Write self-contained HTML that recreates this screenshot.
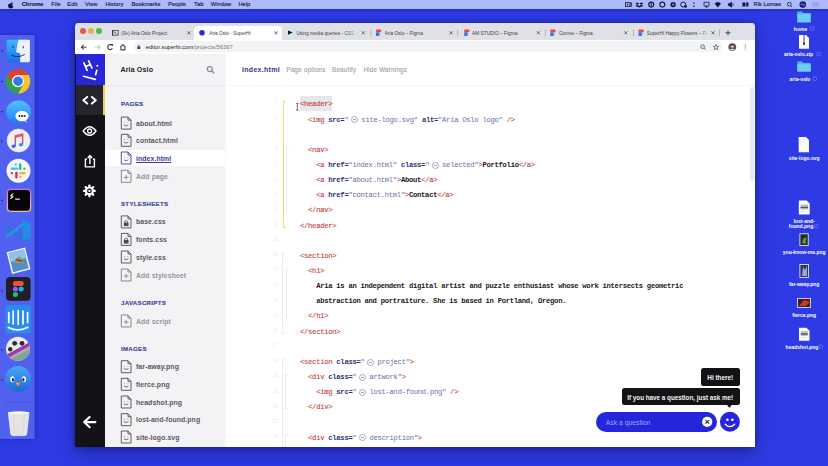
<!DOCTYPE html>
<html><head><meta charset="utf-8">
<style>
*{margin:0;padding:0;box-sizing:border-box}
html,body{width:828px;height:466px;overflow:hidden}
body{background:#2e3be4;font-family:"Liberation Sans",sans-serif;position:relative}
.a{position:absolute}
#menubar{left:0;top:0;width:828px;height:9px;background:#acb9fa;box-shadow:0 1px 3px rgba(0,0,60,.3);z-index:2}
#menubar span{position:absolute;top:0.3px;line-height:9px;font-size:5.8px;color:#16163a;white-space:nowrap;-webkit-text-stroke:0.12px #16163a}
#dock{left:0;top:35px;width:34.5px;height:404px;background:#5061ef}
#win{left:75px;top:22.9px;width:679.6px;height:424px;background:linear-gradient(to bottom,#dfe1e6 0,#dfe1e6 17px,#fff 17px,#fff 31px,#121217 31px);border-radius:4px 4px 0 0;overflow:hidden;box-shadow:0 0 5px rgba(0,0,60,.35),0 6px 18px rgba(0,0,50,.35)}
#tabs{left:0.5px;top:0;width:679px;height:17px;background:#dfe1e6}
#toolbar{left:0.5px;top:17px;width:679px;height:14px;background:#fff}
#omni{left:58px;top:1.3px;width:589px;height:11px;border-radius:6px;background:#f1f3f4}
.tab{position:absolute;top:3.9px;height:14px;font-size:4.8px;color:#3c4043;line-height:14px;white-space:nowrap}
#content{left:0.5px;top:31px;width:679px;height:393px;background:#fff}
#side{left:0;top:0;width:29.5px;height:393px;background:#121217}
#files{left:29.5px;top:0;width:120px;height:393px;background:#f3f3f6;box-shadow:1px 0 2px rgba(0,0,40,.04)}
.sec{position:absolute;left:16px;font-size:6.1px;font-weight:bold;color:#42429c;letter-spacing:.3px;margin-top:0.3px;-webkit-text-stroke:0.15px #42429c}
.fi{position:absolute;left:31px;font-size:6.9px;letter-spacing:.08px;font-weight:bold;color:#58585f;white-space:nowrap;line-height:8px;margin-top:0.8px}
.ic{position:absolute;left:15.5px;width:10px;height:12px}
#code{left:152px;top:0;width:527px;height:393px}
.ln{position:absolute;left:0;white-space:pre;font-family:"Liberation Mono",monospace;font-size:7.2px;letter-spacing:-0.28px;line-height:15.14px;height:15.14px;color:#222}
.w{display:inline-block;width:12.9px;height:6px;vertical-align:middle;position:relative}
.w:after{content:"";box-sizing:border-box;position:absolute;left:2.7px;top:-0.4px;width:7px;height:7px;border:0.65px solid #a8a8b4;border-radius:50%}
.w:before{content:"";box-sizing:border-box;position:absolute;left:4.8px;top:2.8px;width:2.8px;height:0.65px;background:#a8a8b4}
.hl{}
.t{color:#c43e3e;-webkit-text-stroke:0.12px #c43e3e}
.k{color:#2b3577;font-weight:bold}
.s{color:#6c6da6}
.b{color:#1a1a1a;font-weight:bold}
.dt{position:absolute;font-size:5.2px;font-weight:bold;color:#fff;white-space:nowrap;text-align:center}
</style></head><body>

<!-- menu bar -->
<div id="menubar" class="a">
  <span style="left:21.7px;font-weight:bold">Chrome</span>
  <span style="left:51.300000000000004px">File</span>
  <span style="left:67.3px">Edit</span>
  <span style="left:85.10000000000001px">View</span>
  <span style="left:105.4px">History</span>
  <span style="left:131.5px">Bookmarks</span>
  <span style="left:167.89999999999998px">People</span>
  <span style="left:194.1px">Tab</span>
  <span style="left:210.7px">Window</span>
  <span style="left:238.39999999999998px">Help</span>
  <span style="left:753.6px">Rik Lomas</span>
</div>

<svg class="a" style="left:0;top:0;z-index:3" width="828" height="12" viewBox="0 0 828 12">
 <g fill="#16163a" stroke="none">
  <path d="M11.6,2.9 Q12.5,2.6 13.1,3.3 Q12.1,3.9 12.3,5.2 Q12.5,6.3 13.4,6.6 Q13,7.8 12.2,8.3 Q11.7,8.6 11.1,8.3 Q10.6,8.1 10.1,8.3 Q9.5,8.6 9,8.1 Q8,7 8.1,5.4 Q8.3,3.6 9.8,3.4 Q10.3,3.4 10.8,3.6 Q11.2,3.7 11.6,2.9 Z M11.2,2.9 Q11.1,1.8 12.1,1.4 Q12.2,2.5 11.2,2.9 Z"/>
 </g>
 <g fill="none" stroke="#16163a" stroke-width="0.8">
  <rect x="625.6" y="2.6" width="4.4" height="4" />
  <path d="M630,3.6 L631.6,2.8 L631.6,6.4 L630,5.6"/>
  <circle cx="651.2" cy="4.6" r="2.5" stroke-width="1.1"/><circle cx="662.3" cy="4.6" r="2.5" stroke-width="1.1"/><circle cx="673.1" cy="4.6" r="2.7" fill="#16163a" stroke="none"/>
  <circle cx="683.2" cy="4.5" r="2.5" stroke-width="1"/>
  <path d="M704,2.3 L709,2.3 L709,6 L704,6 Z"/>
  <path d="M728.5,3.6 L729.8,3.6 L731.5,2.2 L731.5,7.2 L729.8,5.8 L728.5,5.8 Z" fill="#16163a"/>
  <path d="M732.8,3.3 Q733.6,4.7 732.8,6.1"/>
  <circle cx="789.3" cy="4.2" r="1.9"/><path d="M790.6,5.6 L792,7"/>
  <path d="M812,3 L819,3 M812,4.6 L819,4.6 M812,6.2 L819,6.2" stroke="#8a90e0"/>
 </g>
 <g fill="#16163a">
  <circle cx="627.6" cy="4.6" r="0.8"/>
  <path d="M637.3,2.4 L639.3,3.6 L637.3,4.8 L635.3,3.6 Z M641.3,2.4 L643.3,3.6 L641.3,4.8 L639.3,3.6 Z M637.3,4.8 L639.3,6 L641.3,4.8 L643.3,6 L639.3,7.6 L635.3,6 Z"/>
  <rect x="650.6" y="3.2" width="1.1" height="2.8"/>
  <circle cx="673.1" cy="4.6" r="1.3" fill="#6a70c8"/>
  <rect x="684.4" y="5.2" width="2.4" height="2.4"/>
  <path d="M692.7,3.4 L693.9,2 L695.1,3.4 Z M692.7,5.8 L693.9,7.2 L695.1,5.8 Z"/>
  <path d="M705.2,7.4 L706.5,5.4 L707.8,7.4 Z"/>
  <path d="M714.6,3.6 Q717.8,0.4 721,3.6 L717.8,7.4 Z"/>
  <path d="M742.4,2.6 L745,2.6 Q746.2,4.6 745,6.6 L742.4,6.6 Z M745.8,2.6 L748.4,2.6 L748.4,6.6 L745.8,6.6 Q747,4.6 745.8,2.6 Z"/>
  <circle cx="802.8" cy="4.6" r="3.3" fill="#1a237a"/>
 </g>
 <path d="M800.8,4.6 Q802,3 803,4.6 Q804,6.2 805,4.6" stroke="#acb9fa" stroke-width="0.7" fill="none"/>
</svg>
<!-- dock -->
<div class="a" style="left:0;top:35px;width:34.5px;height:404px;box-shadow:0 0 4px rgba(0,0,60,.35)"></div>
<svg class="a" style="left:0;top:0" width="40" height="466" viewBox="0 0 40 466">
  <rect x="0" y="35" width="34.5" height="404" fill="#5061ef"/>
  <g fill="#1b1f5a">
    <circle cx="2" cy="51" r="0.8"/><circle cx="2" cy="81.5" r="0.8"/><circle cx="2" cy="111.6" r="0.8"/><circle cx="2" cy="141.3" r="0.8"/>
    <circle cx="2" cy="200.5" r="0.8"/><circle cx="2" cy="291" r="0.8"/><circle cx="2" cy="350" r="0.8"/><circle cx="2" cy="380" r="0.8"/>
  </g>
  <!-- finder -->
  <defs><linearGradient id="fg" x1="0" y1="0" x2="0" y2="1"><stop offset="0" stop-color="#3cbaf6"/><stop offset="1" stop-color="#1a6fe6"/></linearGradient></defs>
  <rect x="6.7" y="39.7" width="23.2" height="22.6" rx="1.5" fill="url(#fg)"/>
  <path d="M18.6,39.7 L28.4,39.7 Q29.9,39.7 29.9,41.2 L29.9,60.8 Q29.9,62.3 28.4,62.3 L20.2,62.3 L20.2,53.2 L16.2,52.2 Q16.5,46 18.6,39.7 Z" fill="#eef0f5"/>
  <path d="M11.2,55 Q17.8,58.6 24.7,54.4" stroke="#15224a" stroke-width="0.9" fill="none"/>
  <rect x="12.5" y="45.8" width="0.9" height="2.2" fill="#15224a"/><rect x="22.8" y="46.1" width="0.9" height="2.2" fill="#15224a"/>
  <!-- chrome -->
  <g transform="translate(18 81.2)">
    <circle r="12.3" fill="#2f9e4f"/>
    <path d="M0,-6.1 L10.68,-6.1 A12.3,12.3 0 0 0 -10.62,-6.2 L-5.28,3.05 A6.1,6.1 0 0 1 0,-6.1 Z" fill="#dc4233"/>
    <path d="M0,-6.1 L10.68,-6.1 A12.3,12.3 0 0 0 -10.62,-6.2 L-5.28,3.05 A6.1,6.1 0 0 1 0,-6.1 Z" fill="#f7c22c" transform="rotate(120)"/>
    <path d="M0,-6.1 L10.68,-6.1 A12.3,12.3 0 0 0 -10.62,-6.2 L-5.28,3.05 A6.1,6.1 0 0 1 0,-6.1 Z" fill="#2f9e4f" transform="rotate(240)"/>
    <circle r="6.1" fill="#fff"/><circle r="4.8" fill="#3a78e0"/>
  </g>
  <!-- messages -->
  <defs><linearGradient id="mg" x1="0" y1="0" x2="0" y2="1"><stop offset="0" stop-color="#55c0ff"/><stop offset="1" stop-color="#1b7ff2"/></linearGradient>
  <linearGradient id="ng" x1="0" y1="0" x2="0" y2="1"><stop offset="0" stop-color="#f0466a"/><stop offset=".55" stop-color="#c8508f"/><stop offset="1" stop-color="#3f7ff0"/></linearGradient></defs>
  <ellipse cx="18.5" cy="112" rx="12.5" ry="11.5" fill="url(#mg)"/>
  <ellipse cx="22" cy="116" rx="6.6" ry="5.2" fill="#fff"/>
  <path d="M25,120 L27.5,122.3 L24,121 Z" fill="#fff"/>
  <g fill="#1b2550"><circle cx="19.4" cy="116" r="1.05"/><circle cx="22" cy="116" r="1.05"/><circle cx="24.6" cy="116" r="1.05"/></g>
  <!-- music -->
  <circle cx="18.6" cy="140.5" r="11.6" fill="#f1f0f4"/>
  <circle cx="18.6" cy="140.5" r="11.6" fill="none" stroke="#dcdbe6" stroke-width="0.6"/>
  <path d="M15.3,146 L15.3,136 L22.6,134 L22.6,144.5" stroke="url(#ng)" stroke-width="1.5" fill="none"/>
  <path d="M15.3,136 L22.6,134 L22.6,136 L15.3,138 Z" fill="#ec4a6e"/>
  <ellipse cx="13.6" cy="146.2" rx="2" ry="1.7" fill="#5a5ad8"/><ellipse cx="20.9" cy="144.8" rx="2" ry="1.7" fill="#3c8af0"/>
  <!-- slack -->
  <circle cx="18.5" cy="170.8" r="12" fill="#f6f6f8"/>
  <g stroke-width="2.3" stroke-linecap="round">
    <path d="M11.6,168.6 L17.4,168.6" stroke="#36c5f0"/><path d="M15.8,164.4 L15.8,164.5" stroke="#36c5f0"/>
    <path d="M20.2,164.4 L20.2,168.9" stroke="#2eb67d"/><path d="M24.4,168.6 L24.4,168.7" stroke="#2eb67d"/>
    <path d="M20.2,173.1 L24.6,173.1" stroke="#ecb22e"/><path d="M20.5,176.8 L20.5,176.9" stroke="#ecb22e"/>
    <path d="M16.4,172.8 L16.4,177.4" stroke="#e01e5a"/><path d="M11.8,173.1 L11.8,173.2" stroke="#e01e5a"/>
  </g>
  <!-- terminal -->
  <defs><linearGradient id="trg" x1="0" y1="0" x2="0" y2="1"><stop offset="0" stop-color="#d868d8"/><stop offset="1" stop-color="#f4b8a0"/></linearGradient></defs>
  <rect x="7.4" y="189.4" width="23.2" height="21.9" rx="3.2" fill="#06060a" stroke="url(#trg)" stroke-width="1.3"/>
  <path d="M13.2,193.6 L10.6,195.8 L13,196.6 L10.4,198.8" stroke="#fff" stroke-width="1.1" fill="none" stroke-linejoin="round"/>
  <rect x="15.2" y="198.6" width="4.6" height="1.1" fill="#fff"/>
  <!-- vscode -->
  <path d="M7,226.5 L22.8,238.5" stroke="#2279cf" stroke-width="3.4" stroke-linecap="round"/>
  <path d="M7,236.5 L22.8,224.5" stroke="#2b8fe6" stroke-width="3.4" stroke-linecap="round"/>
  <path d="M22.7,219.5 L30.6,223 L30.6,238 L22.7,241.6 Z" fill="#1f8fe8"/>
  <!-- preview -->
  <g transform="rotate(-14 18.5 260.5)">
    <rect x="9" y="249.5" width="19" height="22.5" fill="#f4f6fa"/>
    <rect x="10.5" y="251" width="16" height="19.5" fill="#4f8fcf"/>
    <rect x="10.5" y="251" width="16" height="9" fill="#8fc2ee"/>
    <path d="M13,262 Q17,256 21,257 L24,266 Q19,263 13,262 Z" fill="#a88a60"/>
    <path d="M16,259 L22,262" stroke="#3a2a20" stroke-width="0.8"/>
  </g>
  <!-- figma -->
  <rect x="6" y="277" width="24.6" height="23.8" rx="4" fill="#1f1f25"/>
  <rect x="12.9" y="281" width="10.8" height="5" rx="2.5" fill="#f0503a"/>
  <circle cx="15.4" cy="289" r="2.5" fill="#9b59f6"/><circle cx="21.2" cy="289" r="2.5" fill="#19b6f5"/>
  <circle cx="15.4" cy="294.5" r="2.5" fill="#12c77e"/>
  <!-- intercom -->
  <rect x="5.5" y="305" width="25.5" height="28.4" rx="2" fill="#2a8cf0"/>
  <g stroke="#fff" stroke-width="1.7" stroke-linecap="round" fill="none">
    <path d="M8.8,312.5 L8.8,322.5"/><path d="M13.2,311 L13.2,324"/><path d="M18.2,310.5 L18.2,324.5"/><path d="M23,311 L23,324"/><path d="M27.6,312.5 L27.6,322.5"/>
    <path d="M8.4,327.4 Q18.2,332.6 27.8,327.2"/>
  </g>
  <!-- motion-like -->
  <defs><clipPath id="mc"><circle cx="18" cy="348.7" r="12"/></clipPath></defs>
  <g clip-path="url(#mc)">
    <rect x="5" y="336" width="26" height="26" fill="#e9e9ee"/>
    <path d="M4,356 L32,341 L32,364 L4,364 Z" fill="#7aa890"/>
    <path d="M4,356 L32,341 L32,345 L4,360 Z" fill="#a03aa8"/>
    <path d="M4,360 L32,345 L32,348 L4,363 Z" fill="#c8a0c8" opacity=".8"/>
  </g>
  <g fill="#2a2a30"><circle cx="14.7" cy="343.3" r="2.4"/><circle cx="22" cy="343.3" r="2.4"/><circle cx="10.2" cy="349.3" r="2.2"/></g>
  <!-- tweetbot -->
  <defs><linearGradient id="tg" x1="0" y1="0" x2="0" y2="1"><stop offset="0" stop-color="#4aa8f8"/><stop offset="1" stop-color="#1c68d8"/></linearGradient></defs>
  <circle cx="18" cy="379" r="13" fill="url(#tg)"/>
  <ellipse cx="12.3" cy="379.3" rx="2.1" ry="3" fill="#fff"/><ellipse cx="24" cy="379.3" rx="2.1" ry="3" fill="#fff"/>
  <ellipse cx="12.9" cy="379.8" rx="1.1" ry="1.7" fill="#0a1a3a"/><ellipse cx="23.4" cy="379.8" rx="1.1" ry="1.7" fill="#0a1a3a"/>
  <path d="M15.6,382.6 L20.4,382.6 L18,386.4 Z" fill="#f2a02a"/>
  <!-- separator -->
  <rect x="4" y="401.8" width="27" height="0.8" fill="#4353d8"/>
  <!-- trash -->
  <path d="M8.4,412.6 L29,412.6 L26.6,434 Q26.3,435.6 24.6,435.6 L12.8,435.6 Q11.1,435.6 10.8,434 Z" fill="#e4e4e2" stroke="#f4f4f8" stroke-width="0.8"/>
  <ellipse cx="18.7" cy="412.6" rx="10.3" ry="1.3" fill="#fafafc"/>
  <path d="M13,414.5 L14,433.5 M24.4,414.5 L23.4,433.5" stroke="#d4d4d6" stroke-width="0.6"/>
</svg>


<!-- desktop icons -->
<svg class="a" style="left:0;top:0" width="828" height="466" viewBox="0 0 828 466">
  <g font-family="Liberation Sans" font-weight="bold" font-size="5px" fill="#fff">
<path d="M797.3,11.4 L802,11.4 L803.2,12.9 L810.7,12.9 L810.7,22.3 L797.3,22.3 Z" fill="#4fb6ec"/>
  <rect x="797.3" y="13.9" width="13.4" height="8.4" fill="#6cccf7"/><text x="800.5" y="30.5" text-anchor="middle">home</text>
  <rect x="810.5" y="26.8" width="3.5" height="3.5" rx="1" fill="none" stroke="#8d95f0" stroke-width="0.5"/>
<path d="M799,35 L806,35 L809,38 L809,48.8 L799,48.8 Z" fill="#fafafa"/><rect x="803.6" y="35" width="0.9" height="9" fill="#333"/><rect x="803.2" y="42.5" width="1.7" height="2.5" fill="#333"/><text x="798.5" y="56.099999999999994" text-anchor="middle">aria-oslo.zip</text>
  <rect x="817" y="52.4" width="3.5" height="3.5" rx="1" fill="none" stroke="#8d95f0" stroke-width="0.5"/>
<path d="M797.3,61.6 L802,61.6 L803.2,63.1 L810.7,63.1 L810.7,71.6 L797.3,71.6 Z" fill="#4fb6ec"/>
  <rect x="797.3" y="64.1" width="13.4" height="7.499999999999993" fill="#6cccf7"/><text x="800" y="80.7" text-anchor="middle">aria-oslo</text>
  <rect x="813" y="77" width="3.5" height="3.5" rx="1" fill="none" stroke="#8d95f0" stroke-width="0.5"/>
<path d="M798.7,137 L806,137 L809,140 L809,152.3 L798.7,152.3 Z" fill="#fafafa"/><text x="804.2" y="159.70000000000002" text-anchor="middle">site-logo.svg</text>
<path d="M798.8,200.6 L806.7,200.6 L809.7,203.6 L809.7,214.5 L798.8,214.5 Z" fill="#fafafa"/><rect x="800.5" y="204.5" width="7.5" height="5" fill="#b0c0d0"/><rect x="800.5" y="206.8" width="7.5" height="1.3" fill="#5a5a48"/><rect x="801.5" y="211" width="4" height="0.5" fill="#c8c8c8"/><text x="804.2" y="222.60000000000002" text-anchor="middle">lost-and-</text><text x="801" y="228.20000000000002" text-anchor="middle">found.png</text>
  <rect x="814.5" y="224.5" width="3.5" height="3.5" rx="1" fill="none" stroke="#8d95f0" stroke-width="0.5"/>
  <rect x="799.5" y="233.4" width="9.1" height="12.5" fill="#f2f2f2"/><rect x="800.3" y="234.2" width="7.5" height="10.9" fill="#1e3020"/><path d="M802,243 Q804,236 806.5,238 Q805,241 806,244 Z" fill="#6f9050"/>
<text x="804.2" y="254.0" text-anchor="middle">you-know-me.png</text>
  <rect x="799.5" y="264" width="9.5" height="13.8" fill="#f2f2f2"/><rect x="800.3" y="264.8" width="7.9" height="12.2" fill="#2a3570"/><path d="M802,276 L803,267 L805,270 L807,266 L807,276 Z" fill="#9aa8d0"/>
<text x="804.2" y="285.5" text-anchor="middle">far-away.png</text>
  <rect x="797" y="298" width="14" height="9.8" fill="#f0f0f0"/><rect x="797.8" y="298.8" width="12.4" height="8.2" fill="#3a2020"/><path d="M799,306 L804,300 L810,302 L806,306 Z" fill="#c83a30"/>
<text x="804.2" y="316.7" text-anchor="middle">fierce.png</text>
<path d="M799,327.8 L806.5,327.8 L809.5,330.8 L809.5,340.8 L799,340.8 Z" fill="#fafafa"/><rect x="800.8" y="331" width="7" height="5" fill="#b8c4d0"/><rect x="800.8" y="333.3" width="7" height="1.4" fill="#4a5058"/><rect x="801.5" y="337.5" width="4" height="0.5" fill="#c8c8c8"/><text x="802" y="348.5" text-anchor="middle">headshot.png</text>
  <rect x="819" y="344.8" width="3.5" height="3.5" rx="1" fill="none" stroke="#8d95f0" stroke-width="0.5"/>
  </g>
</svg>

<!-- chrome window -->
<div id="win" class="a">
  <div id="tabs" class="a">
    <div class="a" style="left:4.65px;top:5.2px;width:5.8px;height:5.8px;border-radius:50%;background:#df5a55"></div>
    <div class="a" style="left:12.9px;top:5.2px;width:5.8px;height:5.8px;border-radius:50%;background:#ebb045"></div>
    <div class="a" style="left:20.7px;top:5.2px;width:5.8px;height:5.8px;border-radius:50%;background:#55b84a"></div>
    <div class="a" style="left:118.7px;top:3.2px;width:88.2px;height:14px;background:#fff;border-radius:4px 4px 0 0"></div>
    <div class="tab" style="left:45.8px;width:60px;overflow:hidden">(9+) Aria Oslo Project</div>
    <div class="tab" style="left:133.7px;width:60px;overflow:hidden">Aria Oslo - SuperHi</div>
    <div class="tab" style="left:220.9px;width:60px;overflow:hidden">Using media queries - CSS</div>
    <div class="tab" style="left:309.1px;width:60px;overflow:hidden">Aria Oslo – Figma</div>
    <div class="tab" style="left:396.5px;width:60px;overflow:hidden">AM STUDIO – Figma</div>
    <div class="tab" style="left:483.4px;width:60px;overflow:hidden">Connie – Figma</div>
    <div class="tab" style="left:571.3px;width:60px;overflow:hidden">SuperHi Happy Flowers – Figma</div>
    <div class="a" style="left:270.5px;top:5px;width:12px;height:10px;background:linear-gradient(90deg,rgba(222,225,230,0),#dee1e6)"></div>
    <div class="a" style="left:624.5px;top:5px;width:10px;height:10px;background:linear-gradient(90deg,rgba(222,225,230,0),#dee1e6)"></div>
  </div>
  <div id="toolbar" class="a">
    <div id="omni" class="a" style="left:58px;top:1.3px;width:588px;height:11px"></div>
    <div class="a" style="left:70.2px;top:0.2px;line-height:14px;font-size:5.75px;letter-spacing:.02px;color:#202124;white-space:nowrap">editor.superhi.com<span style="color:#75787c">/projects/56367</span></div>
  </div>

  <div id="content" class="a">
    <div id="side" class="a">
      <div class="a" style="left:0;top:0;width:29.5px;height:31px;background:#2727d8"></div>
      <div class="a" style="left:0;top:31px;width:29.5px;height:30px;background:#24242c"></div>
      <div class="a" style="left:27px;top:31px;width:2.5px;height:30px;background:#f2d44a"></div>
    </div>
    <div id="files" class="a">
      <div class="a" style="left:15.5px;top:12.2px;font-size:7.1px;letter-spacing:.12px;font-weight:bold;color:#222;line-height:8px">Aria Oslo</div>
      <div class="a" style="left:0;top:31px;width:120px;height:1px;background:#e8e8ec"></div>
      <div class="sec" style="top:46px">PAGES</div>
      <div class="fi" style="top:65px">about.html</div>
      <div class="fi" style="top:82.5px">contact.html</div>
      <div class="a" style="left:0;top:96.5px;width:120px;height:15.4px;background:#fff"></div>
      <div class="fi" style="top:100px;color:#3b3ba6;text-decoration:underline">index.html</div>
      <div class="fi" style="top:118px;color:#96969c">Add page</div>
      <div class="sec" style="top:146px">STYLESHEETS</div>
      <div class="fi" style="top:163.5px">base.css</div>
      <div class="fi" style="top:181px">fonts.css</div>
      <div class="fi" style="top:199px">style.css</div>
      <div class="fi" style="top:217px;color:#96969c">Add stylesheet</div>
      <div class="sec" style="top:245px">JAVASCRIPTS</div>
      <div class="fi" style="top:263px;color:#96969c">Add script</div>
      <div class="sec" style="top:291px">IMAGES</div>
      <div class="fi" style="top:308.5px">far-away.png</div>
      <div class="fi" style="top:326.5px">fierce.png</div>
      <div class="fi" style="top:344px">headshot.png</div>
      <div class="fi" style="top:361.5px">lost-and-found.png</div>
      <div class="fi" style="top:379px">site-logo.svg</div>
    </div>
    <div id="code" class="a">
      <div class="a" style="left:14.5px;top:12.2px;font-size:7px;letter-spacing:.3px;font-weight:bold;color:#35358f;white-space:nowrap;line-height:8px">index.html</div>
      <div class="a" style="left:59px;top:12.5px;font-size:6.3px;letter-spacing:.2px;color:#9c9ca4;-webkit-text-stroke:0.1px #9c9ca4;white-space:nowrap;line-height:8px">Page options</div>
      <div class="a" style="left:104.5px;top:12.5px;font-size:6.3px;letter-spacing:.2px;color:#9c9ca4;-webkit-text-stroke:0.1px #9c9ca4;white-space:nowrap;line-height:8px">Beautify</div>
      <div class="a" style="left:136px;top:12.5px;font-size:6.3px;letter-spacing:.2px;color:#9c9ca4;-webkit-text-stroke:0.1px #9c9ca4;white-space:nowrap;line-height:8px">Hide Warnings</div>
      <div class="a" style="left:0;top:31px;width:527px;height:1px;background:#f3f3f5"></div>
<div class="a" style="left:55.60px;top:47.00px;width:1.1px;height:126.50px;background:#eee06a"></div>
<div class="a" style="left:55.60px;top:47.00px;width:2.5px;height:0.8px;background:#eee06a"></div>
<div class="a" style="left:55.60px;top:172.70px;width:2.5px;height:0.8px;background:#eee06a"></div>
<div class="a" style="left:58.50px;top:92.00px;width:0.8px;height:67.00px;background:#ebebef"></div>
<div class="a" style="left:58.50px;top:92.00px;width:2.5px;height:0.8px;background:#ebebef"></div>
<div class="a" style="left:54.90px;top:199.00px;width:0.8px;height:81.40px;background:#ebebef"></div>
<div class="a" style="left:54.90px;top:199.00px;width:2.5px;height:0.8px;background:#ebebef"></div>
<div class="a" style="left:54.90px;top:279.60px;width:2.5px;height:0.8px;background:#ebebef"></div>
<div class="a" style="left:58.10px;top:214.00px;width:0.8px;height:50.30px;background:#ebebef"></div>
<div class="a" style="left:58.10px;top:214.00px;width:2.5px;height:0.8px;background:#ebebef"></div>
<div class="a" style="left:58.10px;top:263.50px;width:2.5px;height:0.8px;background:#ebebef"></div>
<div class="a" style="left:54.70px;top:304.30px;width:0.8px;height:88.70px;background:#ebebef"></div>
<div class="a" style="left:54.70px;top:304.30px;width:2.5px;height:0.8px;background:#ebebef"></div>
<div class="a" style="left:57.50px;top:320.40px;width:0.8px;height:34.40px;background:#ebebef"></div>
<div class="a" style="left:57.50px;top:320.40px;width:2.5px;height:0.8px;background:#ebebef"></div>
<div class="a" style="left:57.50px;top:354.00px;width:2.5px;height:0.8px;background:#ebebef"></div>
<div class="a" style="left:57.50px;top:380.00px;width:0.8px;height:13.00px;background:#ebebef"></div>
<div class="a" style="left:57.50px;top:380.00px;width:2.5px;height:0.8px;background:#ebebef"></div>
<div class="a" style="left:34.50px;width:16px;text-align:right;top:46.00px;font-size:4.6px;line-height:8px;color:#ececf0;font-family:'Liberation Mono',monospace">1</div>
<div class="a" style="left:34.50px;width:16px;text-align:right;top:61.14px;font-size:4.6px;line-height:8px;color:#ececf0;font-family:'Liberation Mono',monospace">2</div>
<div class="a" style="left:34.50px;width:16px;text-align:right;top:76.28px;font-size:4.6px;line-height:8px;color:#ececf0;font-family:'Liberation Mono',monospace">3</div>
<div class="a" style="left:34.50px;width:16px;text-align:right;top:91.42px;font-size:4.6px;line-height:8px;color:#ececf0;font-family:'Liberation Mono',monospace">4</div>
<div class="a" style="left:34.50px;width:16px;text-align:right;top:106.56px;font-size:4.6px;line-height:8px;color:#ececf0;font-family:'Liberation Mono',monospace">5</div>
<div class="a" style="left:34.50px;width:16px;text-align:right;top:121.70px;font-size:4.6px;line-height:8px;color:#ececf0;font-family:'Liberation Mono',monospace">6</div>
<div class="a" style="left:34.50px;width:16px;text-align:right;top:136.84px;font-size:4.6px;line-height:8px;color:#ececf0;font-family:'Liberation Mono',monospace">7</div>
<div class="a" style="left:34.50px;width:16px;text-align:right;top:151.98px;font-size:4.6px;line-height:8px;color:#ececf0;font-family:'Liberation Mono',monospace">8</div>
<div class="a" style="left:34.50px;width:16px;text-align:right;top:167.12px;font-size:4.6px;line-height:8px;color:#ececf0;font-family:'Liberation Mono',monospace">9</div>
<div class="a" style="left:34.50px;width:16px;text-align:right;top:182.26px;font-size:4.6px;line-height:8px;color:#ececf0;font-family:'Liberation Mono',monospace">10</div>
<div class="a" style="left:34.50px;width:16px;text-align:right;top:197.40px;font-size:4.6px;line-height:8px;color:#ececf0;font-family:'Liberation Mono',monospace">11</div>
<div class="a" style="left:34.50px;width:16px;text-align:right;top:212.54px;font-size:4.6px;line-height:8px;color:#ececf0;font-family:'Liberation Mono',monospace">12</div>
<div class="a" style="left:34.50px;width:16px;text-align:right;top:227.68px;font-size:4.6px;line-height:8px;color:#ececf0;font-family:'Liberation Mono',monospace">13</div>
<div class="a" style="left:34.50px;width:16px;text-align:right;top:242.82px;font-size:4.6px;line-height:8px;color:#ececf0;font-family:'Liberation Mono',monospace">14</div>
<div class="a" style="left:34.50px;width:16px;text-align:right;top:257.96px;font-size:4.6px;line-height:8px;color:#ececf0;font-family:'Liberation Mono',monospace">15</div>
<div class="a" style="left:34.50px;width:16px;text-align:right;top:273.10px;font-size:4.6px;line-height:8px;color:#ececf0;font-family:'Liberation Mono',monospace">16</div>
<div class="a" style="left:34.50px;width:16px;text-align:right;top:288.24px;font-size:4.6px;line-height:8px;color:#ececf0;font-family:'Liberation Mono',monospace">17</div>
<div class="a" style="left:34.50px;width:16px;text-align:right;top:303.38px;font-size:4.6px;line-height:8px;color:#ececf0;font-family:'Liberation Mono',monospace">18</div>
<div class="a" style="left:34.50px;width:16px;text-align:right;top:318.52px;font-size:4.6px;line-height:8px;color:#ececf0;font-family:'Liberation Mono',monospace">19</div>
<div class="a" style="left:34.50px;width:16px;text-align:right;top:333.66px;font-size:4.6px;line-height:8px;color:#ececf0;font-family:'Liberation Mono',monospace">20</div>
<div class="a" style="left:34.50px;width:16px;text-align:right;top:348.80px;font-size:4.6px;line-height:8px;color:#ececf0;font-family:'Liberation Mono',monospace">21</div>
<div class="a" style="left:34.50px;width:16px;text-align:right;top:363.94px;font-size:4.6px;line-height:8px;color:#ececf0;font-family:'Liberation Mono',monospace">22</div>
<div class="a" style="left:34.50px;width:16px;text-align:right;top:379.08px;font-size:4.6px;line-height:8px;color:#ececf0;font-family:'Liberation Mono',monospace">23</div>
<div class="a" style="left:72.60px;top:42.10px;width:31.9px;height:15px;background:#e7e7ea"></div>

<div id="lines" class="a" style="left:72.5px;top:0">
<div class="ln" style="top:43.53px"><span class="t hl">&lt;header&gt;</span></div>
<div class="ln" style="top:58.67px">  <span class="t">&lt;img</span> <span class="k">src=</span><span class="s">"</span><span class="w"></span><span class="s">site-logo.svg</span><span class="s">"</span> <span class="k">alt=</span><span class="s">"</span><span class="s">Aria Oslo logo</span><span class="s">"</span> <span class="t">/&gt;</span></div>
<div class="ln" style="top:73.81px"></div>
<div class="ln" style="top:88.95px">  <span class="t">&lt;nav&gt;</span></div>
<div class="ln" style="top:104.09px">    <span class="t">&lt;a</span> <span class="k">href=</span><span class="s">"</span><span class="s">index.html</span><span class="s">"</span> <span class="k">class=</span><span class="s">"</span><span class="w"></span><span class="s">selected</span><span class="s">"</span><span class="t">&gt;</span><span class="b">Portfolio</span><span class="t">&lt;/a&gt;</span></div>
<div class="ln" style="top:119.23px">    <span class="t">&lt;a</span> <span class="k">href=</span><span class="s">"</span><span class="s">about.html</span><span class="s">"</span><span class="t">&gt;</span><span class="b">About</span><span class="t">&lt;/a&gt;</span></div>
<div class="ln" style="top:134.37px">    <span class="t">&lt;a</span> <span class="k">href=</span><span class="s">"</span><span class="s">contact.html</span><span class="s">"</span><span class="t">&gt;</span><span class="b">Contact</span><span class="t">&lt;/a&gt;</span></div>
<div class="ln" style="top:149.51px">  <span class="t">&lt;/nav&gt;</span></div>
<div class="ln" style="top:164.65px"><span class="t">&lt;/header&gt;</span></div>
<div class="ln" style="top:179.79px"></div>
<div class="ln" style="top:194.93px"><span class="t">&lt;section&gt;</span></div>
<div class="ln" style="top:210.07px">  <span class="t">&lt;h1&gt;</span></div>
<div class="ln" style="top:225.21px">    <span class="b">Aria is an independent digital artist and puzzle enthusiast whose work intersects geometric</span></div>
<div class="ln" style="top:240.35px">    <span class="b">abstraction and portraiture. She is based in Portland, Oregon.</span></div>
<div class="ln" style="top:255.49px">  <span class="t">&lt;/h1&gt;</span></div>
<div class="ln" style="top:270.63px"><span class="t">&lt;/section&gt;</span></div>
<div class="ln" style="top:285.77px"></div>
<div class="ln" style="top:300.91px"><span class="t">&lt;section</span> <span class="k">class=</span><span class="s">"</span><span class="w"></span><span class="s">project</span><span class="s">"</span><span class="t">&gt;</span></div>
<div class="ln" style="top:316.05px">  <span class="t">&lt;div</span> <span class="k">class=</span><span class="s">"</span><span class="w"></span><span class="s">artwork</span><span class="s">"</span><span class="t">&gt;</span></div>
<div class="ln" style="top:331.19px">    <span class="t">&lt;img</span> <span class="k">src=</span><span class="s">"</span><span class="w"></span><span class="s">lost-and-found.png</span><span class="s">"</span> <span class="t">/&gt;</span></div>
<div class="ln" style="top:346.33px">  <span class="t">&lt;/div&gt;</span></div>
<div class="ln" style="top:361.47px"></div>
<div class="ln" style="top:376.61px">  <span class="t">&lt;div</span> <span class="k">class=</span><span class="s">"</span><span class="w"></span><span class="s">description</span><span class="s">"</span><span class="t">&gt;</span></div>
</div>
    </div>
  </div>
</div>

<div class="a" style="left:750.3px;top:87px;width:3.4px;height:94px;border-radius:2px;background:#e9e9eb"></div>
<!-- chat widget -->
<div class="a" style="left:701.4px;top:368.3px;width:38.4px;height:17.8px;background:#131316;border-radius:2.5px"></div>
<div class="a" id="hi" style="left:707.3px;top:374.2px;font-size:6.4px;line-height:8px;font-weight:bold;color:#f4f4f6;white-space:nowrap">Hi there!</div>
<div class="a" style="left:621.8px;top:388px;width:118px;height:17.4px;background:#131316;border-radius:2.5px"></div>
<div class="a" style="left:728.4px;top:404px;width:2.8px;height:2.8px;background:#131316;transform:rotate(45deg)"></div>
<div class="a" id="q" style="left:627.2px;top:393.9px;font-size:6.3px;line-height:8px;font-weight:bold;color:#f4f4f6;white-space:nowrap">If you have a question, just ask me!</div>
<div class="a" style="left:595.7px;top:412.4px;width:121px;height:19.5px;background:#2526dc;border-radius:10px"></div>
<div class="a" id="ask" style="left:605.8px;top:419.2px;font-size:6.8px;line-height:8px;color:#a2a4f2;white-space:nowrap">Ask a question</div>
<svg class="a" style="left:0;top:0" width="828" height="466" viewBox="0 0 828 466">
  <circle cx="707.2" cy="421.9" r="5.1" fill="#fff"/>
  <path d="M705.4,420.1 L709,423.7 M709,420.1 L705.4,423.7" stroke="#2c2c66" stroke-width="1.2"/>
  <circle cx="729.9" cy="421.7" r="10" fill="#2526dc"/>
  <circle cx="727.4" cy="419.7" r="1.3" fill="#fff"/><circle cx="732.3" cy="419.7" r="1.3" fill="#fff"/>
  <path d="M725.2,424.2 Q729.9,429 734.6,424.2" stroke="#fff" stroke-width="1.3" fill="none" stroke-linecap="round"/>
</svg>
<!-- overlay icons -->
<svg class="a" style="left:0;top:0" width="828" height="466" viewBox="0 0 828 466">

  <!-- chrome ui -->
<path d="M187.3,31.299999999999997 L190.3,34.3 M190.3,31.299999999999997 L187.3,34.3" stroke="#45484c" stroke-width="0.8"/>
<path d="M274.5,31.299999999999997 L277.5,34.3 M277.5,31.299999999999997 L274.5,34.3" stroke="#45484c" stroke-width="0.8"/>
<path d="M361.8,31.299999999999997 L364.8,34.3 M364.8,31.299999999999997 L361.8,34.3" stroke="#45484c" stroke-width="0.8"/>
<path d="M449.5,31.299999999999997 L452.5,34.3 M452.5,31.299999999999997 L449.5,34.3" stroke="#45484c" stroke-width="0.8"/>
<path d="M536.9,31.299999999999997 L539.9,34.3 M539.9,31.299999999999997 L536.9,34.3" stroke="#45484c" stroke-width="0.8"/>
<path d="M624.3,31.299999999999997 L627.3,34.3 M627.3,31.299999999999997 L624.3,34.3" stroke="#45484c" stroke-width="0.8"/>
<path d="M711.5,31.299999999999997 L714.5,34.3 M714.5,31.299999999999997 L711.5,34.3" stroke="#45484c" stroke-width="0.8"/>
<rect x="370.6" y="29.299999999999997" width="0.6" height="7" fill="#9a9ca0"/>
<rect x="457.5" y="29.299999999999997" width="0.6" height="7" fill="#9a9ca0"/>
<rect x="544.9" y="29.299999999999997" width="0.6" height="7" fill="#9a9ca0"/>
<rect x="633" y="29.299999999999997" width="0.6" height="7" fill="#9a9ca0"/>
<rect x="719.3" y="29.299999999999997" width="0.6" height="7" fill="#9a9ca0"/>
<path d="M725.4,32.8 L730.6,32.8 M728,30.199999999999996 L728,35.4" stroke="#3c4043" stroke-width="0.9"/>
<rect x="112" y="30.2" width="1.2" height="5.2" fill="#111"/><rect x="112.6" y="30.4" width="5.6" height="4.8" fill="none" stroke="#444" stroke-width="0.8"/><path d="M113.8,31.6 L116.8,34.2" stroke="#333" stroke-width="0.8"/>
<circle cx="202" cy="32.8" r="2.8" fill="#2b2bd8"/>
<circle cx="290" cy="32.6" r="3.6" fill="#c9eef6" opacity=".8"/><path d="M288,30.4 L292.8,32.6 L288,34.8 Z" fill="#07182a"/>
<rect x="376.0" y="29.5" width="5.2" height="2.8" rx=".8" fill="#e0504a"/><rect x="376.0" y="32.2" width="3.4" height="3.8" rx=".6" fill="#3f6fd8"/><rect x="379.4" y="32.2" width="1.4" height="2.4" fill="#a8c8f0"/>
<rect x="464.2" y="29.5" width="5.2" height="2.8" rx=".8" fill="#e0504a"/><rect x="464.2" y="32.2" width="3.4" height="3.8" rx=".6" fill="#3f6fd8"/><rect x="467.6" y="32.2" width="1.4" height="2.4" fill="#a8c8f0"/>
<rect x="550.3" y="29.5" width="5.2" height="2.8" rx=".8" fill="#e0504a"/><rect x="550.3" y="32.2" width="3.4" height="3.8" rx=".6" fill="#3f6fd8"/><rect x="553.7" y="32.2" width="1.4" height="2.4" fill="#a8c8f0"/>
<rect x="638.5" y="29.5" width="5.2" height="2.8" rx=".8" fill="#e0504a"/><rect x="638.5" y="32.2" width="3.4" height="3.8" rx=".6" fill="#3f6fd8"/><rect x="641.9" y="32.2" width="1.4" height="2.4" fill="#a8c8f0"/>
<path d="M86.6,47.2 L81.6,47.2 M83.7,45 L81.4,47.2 L83.7,49.4" stroke="#45484c" stroke-width="1.15" fill="none"/>
<path d="M94.8,47.2 L99.8,47.2 M97.7,45 L100,47.2 L97.7,49.4" stroke="#c8cacd" stroke-width="1.1" fill="none"/>
<path d="M111.9,45.2 A2.5,2.5 0 1 0 112.4,48.3" stroke="#45484c" stroke-width="1.2" fill="none"/><path d="M110.6,44.1 L113,44.1 L113,46.5 Z" fill="#45484c"/>
<path d="M120.2,47.3 L122.9,44.6 L125.6,47.3 M121,46.6 L121,49.8 L124.8,49.8 L124.8,46.6" stroke="#45484c" stroke-width="1.15" fill="none"/>
<rect x="137.3" y="46.5" width="3" height="2.4" rx=".3" fill="#3c4043"/><path d="M137.9,46.6 L137.9,45.7 Q138.8,44.5 139.7,45.7 L139.7,46.6" stroke="#3c4043" stroke-width="0.6" fill="none"/>
<circle cx="702.6" cy="46.6" r="2" fill="none" stroke="#5f6368" stroke-width="0.8"/><path d="M704,48.0 L705.6,49.6" stroke="#5f6368" stroke-width="0.9"/><path d="M701.6,46.6 L703.6,46.6" stroke="#5f6368" stroke-width="0.5"/>
<polygon points="716.00,44.40 716.73,46.29 718.76,46.40 717.19,47.69 717.70,49.65 716.00,48.55 714.30,49.65 714.81,47.69 713.24,46.40 715.27,46.29" fill="none" stroke="#5f6368" stroke-width="0.8" stroke-linejoin="round"/>
<circle cx="732.3" cy="47.1" r="3.9" fill="#5d4f58"/><circle cx="732.3" cy="46.2" r="1.6" fill="#e8c8b0"/><path d="M729.2,49.7 Q732.3,47.7 735.4,49.7 L735,50.300000000000004 L729.6,50.300000000000004 Z" fill="#d9d9df"/><path d="M730.3,45.6 Q732.3,42.6 734.3,45.6" fill="#3a2a30"/>
<circle cx="745.2" cy="45.1" r="0.55" fill="#5f6368"/>
<circle cx="745.2" cy="47.1" r="0.55" fill="#5f6368"/>
<circle cx="745.2" cy="49.1" r="0.55" fill="#5f6368"/>
  <path d="M297.3,103.4 L297.3,110.2 M296.1,103.4 L298.5,103.4 M296.1,110.2 L298.5,110.2" stroke="#444" stroke-width="0.75"/>
  <!-- logo -->
  <g stroke="#fff" stroke-width="1.7" stroke-linecap="round" fill="none">
    <path d="M83.9,62.9 L87.1,70.3 M88.6,60.9 L92,68.1 M85.4,66.7 L90.2,64.5"/>
    <path d="M96.8,70.3 L95.7,74.6"/>
    <path d="M83.4,76.3 L95.3,79.4"/>
  </g>
  <circle cx="97.3" cy="65.7" r="1" fill="#fff"/>
  <!-- code icon -->
  <path d="M87.2,96.9 L83.3,100.2 L87.2,103.6 M91.9,96.9 L95.8,100.2 L91.9,103.6" stroke="#fff" stroke-width="2" fill="none" stroke-linecap="round" stroke-linejoin="round"/>
  <!-- eye -->
  <path d="M83.2,131 Q89.6,122.4 96,131 Q89.6,139.6 83.2,131 Z" fill="none" stroke="#fff" stroke-width="1.5" stroke-linejoin="round"/>
  <circle cx="89.6" cy="131" r="2" fill="none" stroke="#fff" stroke-width="1.3"/>
  <!-- share -->
  <path d="M86.9,159.3 L85.4,159.3 L85.4,166.9 L94.4,166.9 L94.4,159.3 L92.9,159.3" stroke="#fff" stroke-width="1.4" fill="none"/>
  <path d="M89.9,164 L89.9,155.8 M87.7,158 L89.9,155.6 L92.1,158" stroke="#fff" stroke-width="1.4" fill="none"/>
  <!-- gear -->
  <g transform="translate(89.4 190.9)">
    <g fill="#fff">
      <rect x="-1.1" y="-6.4" width="2.2" height="12.8" rx="0.8"/>
      <rect x="-1.1" y="-6.4" width="2.2" height="12.8" rx="0.8" transform="rotate(45)"/>
      <rect x="-1.1" y="-6.4" width="2.2" height="12.8" rx="0.8" transform="rotate(90)"/>
      <rect x="-1.1" y="-6.4" width="2.2" height="12.8" rx="0.8" transform="rotate(135)"/>
      <circle r="4.5"/>
    </g>
    <circle r="2.4" fill="#121217"/><circle r="1.1" fill="#fff"/>
  </g>
  <!-- back arrow -->
  <path d="M95.4,422.1 L84.4,422.1 M89.6,417 L84.2,422.1 L89.6,427.2" stroke="#fff" stroke-width="2.1" fill="none" stroke-linecap="round" stroke-linejoin="round"/>
  <!-- search in files header -->
  <circle cx="209.8" cy="69" r="2.5" fill="none" stroke="#8e8e96" stroke-width="1.25"/>
  <path d="M211.8,71 L213.9,73.1" stroke="#8e8e96" stroke-width="1.4" stroke-linecap="round"/>
<path d="M121.3,117.1 L128,117.1 L131,120.1 L131,129.1 L121.3,129.1 Z M128,117.1 L128,120.1 L131,120.1" fill="none" stroke="#4c4c54" stroke-width="0.9" stroke-linejoin="round"/><circle cx="124.35000000000001" cy="122.6" r="0.45" fill="#4c4c54"/><circle cx="127.95" cy="122.6" r="0.45" fill="#4c4c54"/><path d="M123.85000000000001,124.89999999999999 Q126.15,126.89999999999999 128.45000000000002,124.89999999999999" fill="none" stroke="#4c4c54" stroke-width="0.8"/>
<path d="M121.3,134.3 L128,134.3 L131,137.3 L131,146.3 L121.3,146.3 Z M128,134.3 L128,137.3 L131,137.3" fill="none" stroke="#4c4c54" stroke-width="0.9" stroke-linejoin="round"/><circle cx="124.35000000000001" cy="139.8" r="0.45" fill="#4c4c54"/><circle cx="127.95" cy="139.8" r="0.45" fill="#4c4c54"/><path d="M123.85000000000001,142.10000000000002 Q126.15,144.10000000000002 128.45000000000002,142.10000000000002" fill="none" stroke="#4c4c54" stroke-width="0.8"/>
<path d="M121.3,152 L128,152 L131,155 L131,164 L121.3,164 Z M128,152 L128,155 L131,155" fill="none" stroke="#3b3ba6" stroke-width="0.9" stroke-linejoin="round"/><circle cx="124.35000000000001" cy="157.5" r="0.45" fill="#3b3ba6"/><circle cx="127.95" cy="157.5" r="0.45" fill="#3b3ba6"/><path d="M123.85000000000001,159.8 Q126.15,161.8 128.45000000000002,159.8" fill="none" stroke="#3b3ba6" stroke-width="0.8"/>
<path d="M121.3,170.3 L128,170.3 L131,173.3 L131,182.3 L121.3,182.3 Z M128,170.3 L128,173.3 L131,173.3" fill="none" stroke="#7c7c84" stroke-width="0.9" stroke-linejoin="round"/><path d="M123.85000000000001,177.3 L128.45000000000002,177.3 M126.15,175.0 L126.15,179.60000000000002" stroke="#7c7c84" stroke-width="0.8"/>
<path d="M121.3,215.9 L128,215.9 L131,218.9 L131,227.9 L121.3,227.9 Z M128,215.9 L128,218.9 L131,218.9" fill="none" stroke="#4c4c54" stroke-width="0.9" stroke-linejoin="round"/><rect x="123.75" y="222.5" width="4.8" height="3.6" fill="#4c4c54"/><path d="M124.75,222.70000000000002 L124.75,221.3 Q126.15,219.70000000000002 127.55000000000001,221.3 L127.55000000000001,222.70000000000002" fill="none" stroke="#4c4c54" stroke-width="0.8"/>
<path d="M121.3,233.4 L128,233.4 L131,236.4 L131,245.4 L121.3,245.4 Z M128,233.4 L128,236.4 L131,236.4" fill="none" stroke="#4c4c54" stroke-width="0.9" stroke-linejoin="round"/><rect x="123.75" y="240.0" width="4.8" height="3.6" fill="#4c4c54"/><path d="M124.75,240.20000000000002 L124.75,238.8 Q126.15,237.20000000000002 127.55000000000001,238.8 L127.55000000000001,240.20000000000002" fill="none" stroke="#4c4c54" stroke-width="0.8"/>
<path d="M121.3,251 L128,251 L131,254 L131,263 L121.3,263 Z M128,251 L128,254 L131,254" fill="none" stroke="#4c4c54" stroke-width="0.9" stroke-linejoin="round"/><circle cx="124.35000000000001" cy="256.5" r="0.45" fill="#4c4c54"/><circle cx="127.95" cy="256.5" r="0.45" fill="#4c4c54"/><path d="M123.85000000000001,258.8 Q126.15,260.8 128.45000000000002,258.8" fill="none" stroke="#4c4c54" stroke-width="0.8"/>
<path d="M121.3,269 L128,269 L131,272 L131,281 L121.3,281 Z M128,269 L128,272 L131,272" fill="none" stroke="#7c7c84" stroke-width="0.9" stroke-linejoin="round"/><path d="M123.85000000000001,276 L128.45000000000002,276 M126.15,273.7 L126.15,278.3" stroke="#7c7c84" stroke-width="0.8"/>
<path d="M121.3,315 L128,315 L131,318 L131,327 L121.3,327 Z M128,315 L128,318 L131,318" fill="none" stroke="#7c7c84" stroke-width="0.9" stroke-linejoin="round"/><path d="M123.85000000000001,322 L128.45000000000002,322 M126.15,319.7 L126.15,324.3" stroke="#7c7c84" stroke-width="0.8"/>
<path d="M121.3,360.7 L128,360.7 L131,363.7 L131,372.7 L121.3,372.7 Z M128,360.7 L128,363.7 L131,363.7" fill="none" stroke="#4c4c54" stroke-width="0.9" stroke-linejoin="round"/><circle cx="124.35000000000001" cy="366.2" r="0.45" fill="#4c4c54"/><circle cx="127.95" cy="366.2" r="0.45" fill="#4c4c54"/><path d="M123.85000000000001,368.5 Q126.15,370.5 128.45000000000002,368.5" fill="none" stroke="#4c4c54" stroke-width="0.8"/>
<path d="M121.3,378.3 L128,378.3 L131,381.3 L131,390.3 L121.3,390.3 Z M128,378.3 L128,381.3 L131,381.3" fill="none" stroke="#4c4c54" stroke-width="0.9" stroke-linejoin="round"/><circle cx="124.35000000000001" cy="383.8" r="0.45" fill="#4c4c54"/><circle cx="127.95" cy="383.8" r="0.45" fill="#4c4c54"/><path d="M123.85000000000001,386.1 Q126.15,388.1 128.45000000000002,386.1" fill="none" stroke="#4c4c54" stroke-width="0.8"/>
<path d="M121.3,396 L128,396 L131,399 L131,408 L121.3,408 Z M128,396 L128,399 L131,399" fill="none" stroke="#4c4c54" stroke-width="0.9" stroke-linejoin="round"/><circle cx="124.35000000000001" cy="401.5" r="0.45" fill="#4c4c54"/><circle cx="127.95" cy="401.5" r="0.45" fill="#4c4c54"/><path d="M123.85000000000001,403.8 Q126.15,405.8 128.45000000000002,403.8" fill="none" stroke="#4c4c54" stroke-width="0.8"/>
<path d="M121.3,413.7 L128,413.7 L131,416.7 L131,425.7 L121.3,425.7 Z M128,413.7 L128,416.7 L131,416.7" fill="none" stroke="#4c4c54" stroke-width="0.9" stroke-linejoin="round"/><circle cx="124.35000000000001" cy="419.2" r="0.45" fill="#4c4c54"/><circle cx="127.95" cy="419.2" r="0.45" fill="#4c4c54"/><path d="M123.85000000000001,421.5 Q126.15,423.5 128.45000000000002,421.5" fill="none" stroke="#4c4c54" stroke-width="0.8"/>
<path d="M121.3,431 L128,431 L131,434 L131,443 L121.3,443 Z M128,431 L128,434 L131,434" fill="none" stroke="#4c4c54" stroke-width="0.9" stroke-linejoin="round"/><circle cx="124.35000000000001" cy="436.5" r="0.45" fill="#4c4c54"/><circle cx="127.95" cy="436.5" r="0.45" fill="#4c4c54"/><path d="M123.85000000000001,438.8 Q126.15,440.8 128.45000000000002,438.8" fill="none" stroke="#4c4c54" stroke-width="0.8"/>
</svg>
</body></html>
